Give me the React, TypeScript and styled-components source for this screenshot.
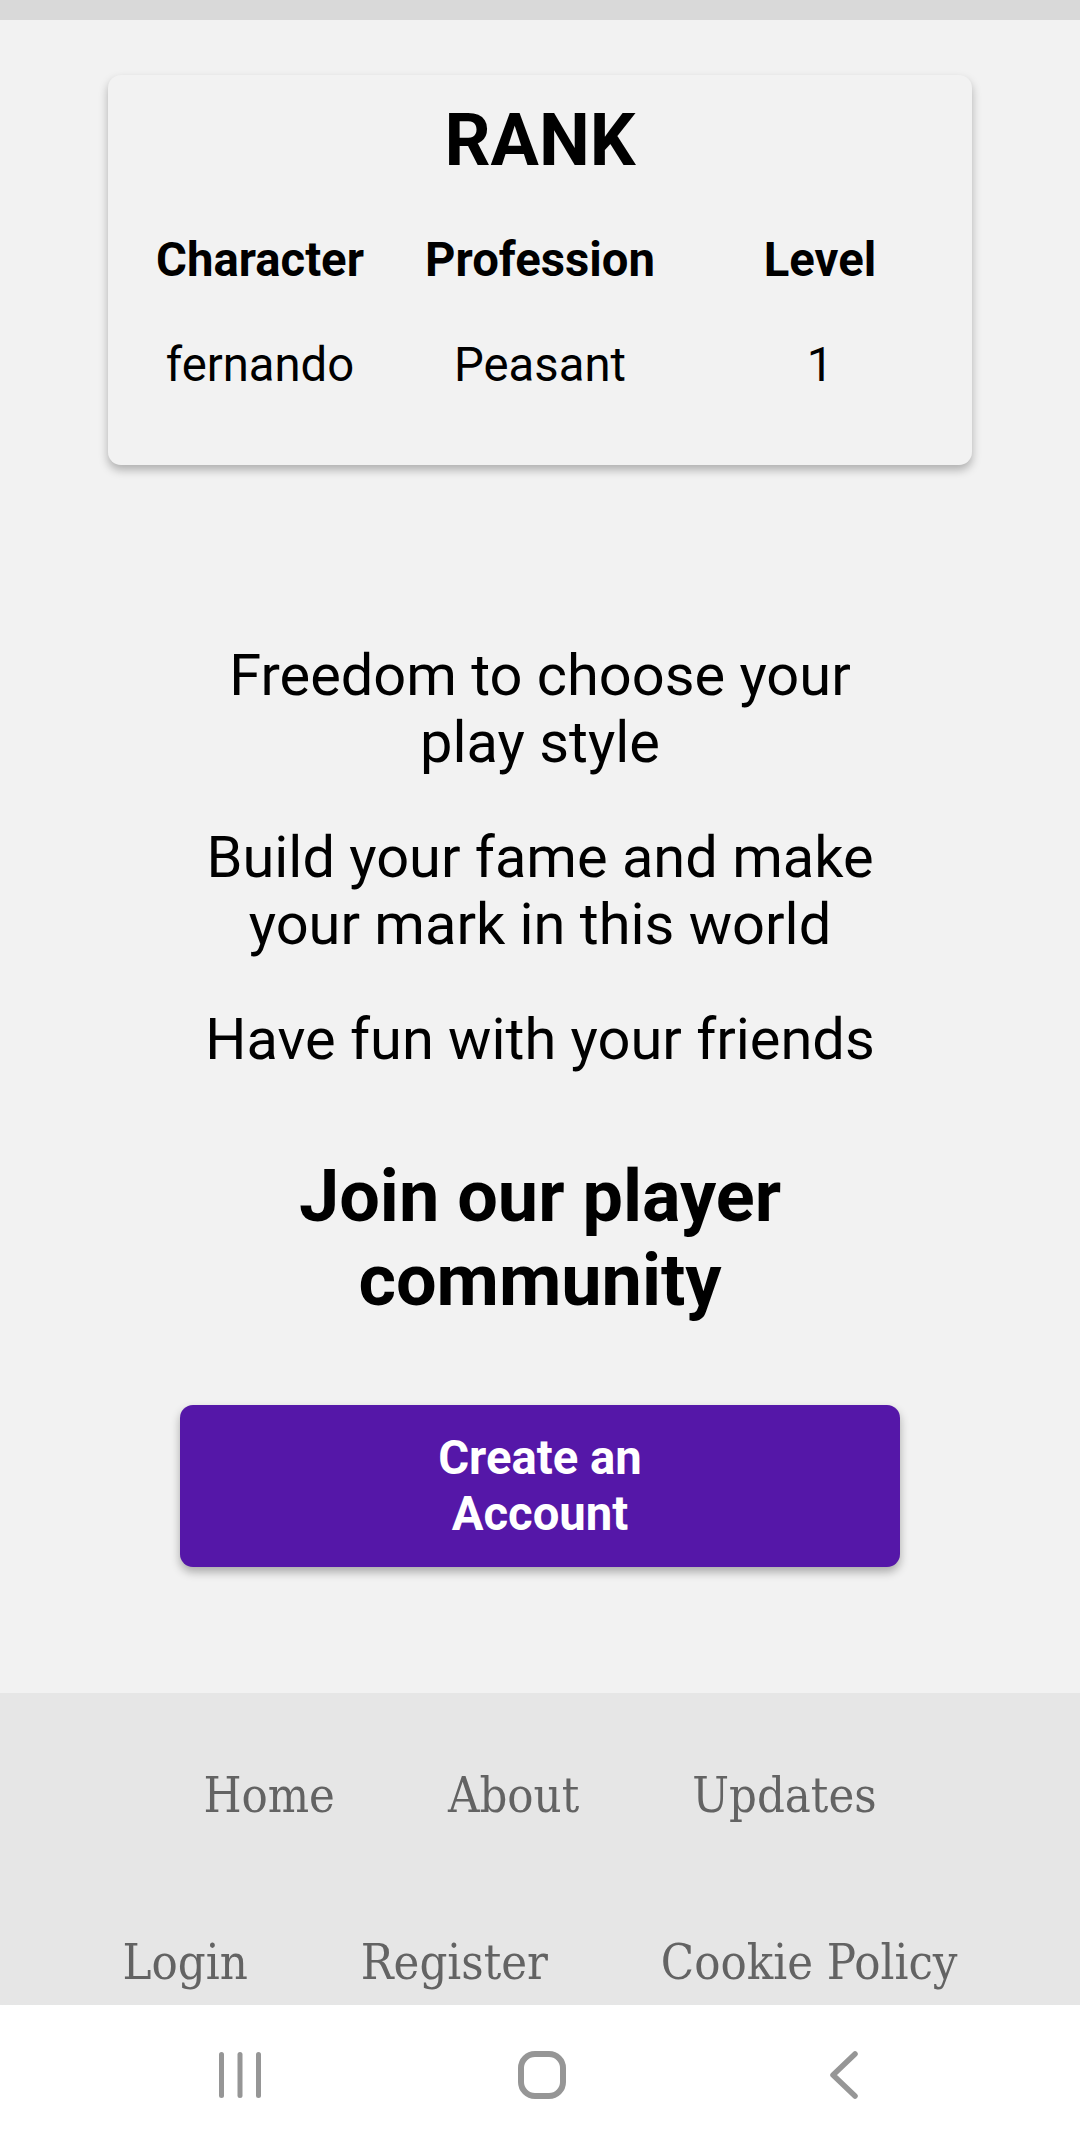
import React from "react";
import styled, { createGlobalStyle } from "styled-components";

const GlobalStyle = createGlobalStyle`
  html, body {
    margin: 0;
    padding: 0;
    background: #f2f2f2;
  }
  body {
    font-family: Roboto, "Liberation Sans", Arial, sans-serif;
    color: #000;
  }
  *, *::before, *::after {
    box-sizing: border-box;
  }
`;

const Page = styled.div`
  width: 1080px;
  height: 2147px;
  display: flex;
  flex-direction: column;
  overflow: hidden;
`;

const TopBar = styled.div`
  flex: none;
  height: 20px;
  background: #d9d9d9;
`;

const Main = styled.main`
  flex: 1;
  display: flex;
  flex-direction: column;
  align-items: center;
  padding-top: 55px;
  background: #f2f2f2;
`;

const Card = styled.section`
  width: 864px;
  padding: 23px 12px 72px;
  border-radius: 13px;
  background: #f2f2f2;
  box-shadow: 0 5px 10px rgba(0, 0, 0, 0.28);
`;

const CardTitle = styled.h2`
  margin: 0;
  text-align: center;
  font-size: 72px;
  font-weight: 700;
  line-height: 86px;
`;

const RankGrid = styled.div`
  display: grid;
  grid-template-columns: repeat(3, 1fr);
  row-gap: 50px;
  margin-top: 49px;
`;

const Cell = styled.div<{ $head?: boolean }>`
  text-align: center;
  font-size: 47.25px;
  line-height: 55px;
  font-weight: ${(p) => (p.$head ? 700 : 400)};
`;

const Features = styled.div`
  width: 700px;
  margin-top: 177px;
  display: flex;
  flex-direction: column;
  gap: 48px;
`;

const Feature = styled.p`
  margin: 0;
  text-align: center;
  font-size: 57.75px;
  line-height: 67px;
`;

const JoinTitle = styled.h2`
  width: 700px;
  margin: 82px 0 0;
  text-align: center;
  font-size: 72px;
  font-weight: 700;
  line-height: 84px;
`;

const CreateButton = styled.button`
  width: 720px;
  height: 162px;
  margin-top: 82px;
  padding: 25px 200px;
  border: none;
  border-radius: 13px;
  background: #5517a8;
  color: #fff;
  font-family: Roboto, "Liberation Sans", Arial, sans-serif;
  font-size: 47.25px;
  font-weight: 700;
  line-height: 56px;
  text-align: center;
  box-shadow: 0 5px 10px rgba(0, 0, 0, 0.3);
  cursor: pointer;
`;

const Footer = styled.footer`
  flex: none;
  height: 312px;
  overflow: hidden;
  display: flex;
  flex-direction: column;
  gap: 103px;
  padding-top: 70px;
  background: #e6e6e6;
`;

const FooterRow = styled.nav`
  display: flex;
  justify-content: center;
  gap: 113px;
`;

const FooterLink = styled.a`
  color: #636363;
  font-family: "DejaVu Serif Condensed", "DejaVu Serif", "Liberation Serif", serif;
  font-stretch: semi-condensed;
  font-size: 48.5px;
  line-height: 64px;
  text-decoration: none;
  white-space: nowrap;
`;

const SystemNav = styled.div`
  flex: none;
  height: 142px;
  display: grid;
  grid-template-columns: repeat(3, 302px);
  align-items: center;
  justify-items: center;
  padding: 0 85px 3px 89px;
  background: #fff;
`;

const NavIcon = styled.svg`
  display: block;
  fill: none;
  stroke: #969696;
  stroke-linecap: round;
  stroke-linejoin: round;
`;

const RecentsIcon = () => (
  <NavIcon width="42" height="46" viewBox="0 0 42 46" strokeWidth={5}>
    <line x1="2.5" y1="2.5" x2="2.5" y2="43.5" />
    <line x1="21" y1="2.5" x2="21" y2="43.5" />
    <line x1="39.5" y1="2.5" x2="39.5" y2="43.5" />
  </NavIcon>
);

const HomeIcon = () => (
  <NavIcon width="48" height="48" viewBox="0 0 48 48" strokeWidth={6}>
    <rect x="3" y="3" width="42" height="42" rx="14" ry="14" />
  </NavIcon>
);

const BackIcon = () => (
  <NavIcon width="28" height="48" viewBox="0 0 28 48" strokeWidth={5.5}>
    <polyline points="25,3 3,24 25,45" />
  </NavIcon>
);

const rows = [
  { character: "fernando", profession: "Peasant", level: "1" },
];

export default function App() {
  return (
    <>
      <GlobalStyle />
      <Page>
        <TopBar />
        <Main>
          <Card>
            <CardTitle>RANK</CardTitle>
            <RankGrid>
              <Cell $head>Character</Cell>
              <Cell $head>Profession</Cell>
              <Cell $head>Level</Cell>
              {rows.map((r) => (
                <React.Fragment key={r.character}>
                  <Cell>{r.character}</Cell>
                  <Cell>{r.profession}</Cell>
                  <Cell>{r.level}</Cell>
                </React.Fragment>
              ))}
            </RankGrid>
          </Card>
          <Features>
            <Feature>Freedom to choose your play style</Feature>
            <Feature>Build your fame and make your mark in this world</Feature>
            <Feature>Have fun with your friends</Feature>
          </Features>
          <JoinTitle>Join our player community</JoinTitle>
          <CreateButton>Create an Account</CreateButton>
        </Main>
        <Footer>
          <FooterRow>
            <FooterLink href="#">Home</FooterLink>
            <FooterLink href="#">About</FooterLink>
            <FooterLink href="#">Updates</FooterLink>
          </FooterRow>
          <FooterRow>
            <FooterLink href="#">Login</FooterLink>
            <FooterLink href="#">Register</FooterLink>
            <FooterLink href="#">Cookie Policy</FooterLink>
          </FooterRow>
        </Footer>
        <SystemNav>
          <RecentsIcon />
          <HomeIcon />
          <BackIcon />
        </SystemNav>
      </Page>
    </>
  );
}
